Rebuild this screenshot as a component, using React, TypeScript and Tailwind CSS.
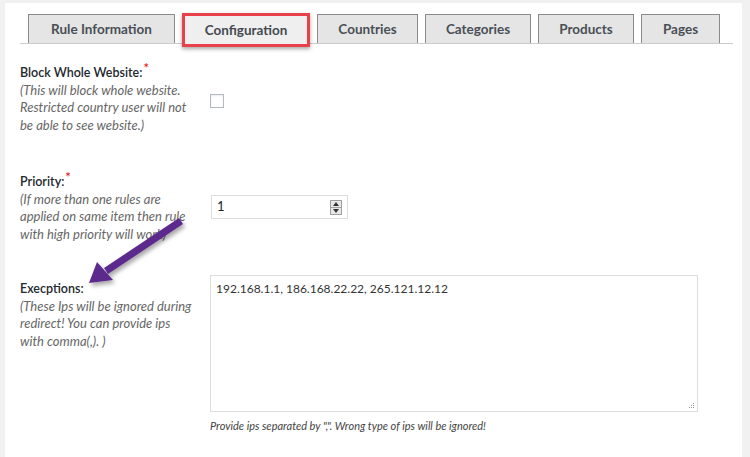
import React from "react";

const tabs = [
  { label: "Rule Information", w: "w-[147px]" },
  { label: "Configuration", w: "w-[128px]", active: true },
  { label: "Countries", w: "w-[101px]" },
  { label: "Categories", w: "w-[106px]" },
  { label: "Products", w: "w-[96px]" },
  { label: "Pages", w: "w-[79px]" },
];

const Req = () => (
  <span className="relative -top-[4px] ml-px text-[13px] leading-none text-[#dd2222]">*</span>
);

interface FieldLabelProps {
  title: string;
  required?: boolean;
  lines: string[];
}

const FieldLabel = ({ title, required, lines }: FieldLabelProps) => (
  <div className="w-[190px] shrink-0 leading-[17.5px]">
    <div className="text-[12.5px] font-semibold text-[#23282d]">
      {title}
      {required && <Req />}
    </div>
    {lines.map((l) => (
      <div key={l} className="text-[13px] italic text-[#666666]">
        {l}
      </div>
    ))}
  </div>
);

export default function App() {
  return (
    <div
      className="w-[750px] h-[457px] overflow-hidden bg-[#f1f1f1] pl-[5px] pt-[3px] pr-[8px]"
      style={{ fontFamily: "Lato, 'Open Sans', sans-serif" }}
    >
      <div className="relative h-full bg-white pl-[15px] pr-[9px]">
        {/* Tabs */}
        <div className="pt-[11px]">
          <div className="flex h-[30px] gap-[7px] border-b border-[#cccccc] pl-[8px]">
            {tabs.map((t) =>
              t.active ? (
                <div
                  key={t.label}
                  className={`${t.w} relative z-10 -mt-px flex h-[34px] shrink-0 items-center justify-center border-[3px] border-[#e8414a] bg-[#efefef] text-[13.5px] font-bold text-[#444a50] shadow-[0_2px_4px_rgba(0,0,0,0.35)]`}
                >
                  {t.label}
                </div>
              ) : (
                <div
                  key={t.label}
                  className={`${t.w} flex h-full shrink-0 items-center justify-center border border-b-0 border-[#8a8a8a] bg-[#e5e5e5] text-[13.5px] font-bold text-[#4a4f55]`}
                >
                  {t.label}
                </div>
              )
            )}
          </div>
        </div>

        {/* Block whole website */}
        <div className="mt-[20px] flex">
          <FieldLabel
            title="Block Whole Website:"
            required
            lines={[
              "(This will block whole website.",
              "Restricted country user will not",
              "be able to see website.)",
            ]}
          />
          <div className="mt-[30px] h-[14px] w-[14px] border border-[#b4b9be] bg-white shadow-[inset_0_1px_2px_rgba(0,0,0,0.08)]" />
        </div>

        {/* Priority */}
        <div className="mt-[39px] flex">
          <FieldLabel
            title="Priority:"
            required
            lines={[
              "(If more than one rules are",
              "applied on same item then rule",
              "with high priority will work)",
            ]}
          />
          <div className="mt-[22px] ml-px flex h-[24px] w-[137px] items-center justify-between border border-[#dddddd] bg-white pl-[5px] pr-[5px] text-[13px] text-[#222]">
            <span>1</span>
            <div className="flex h-[15px] w-[12px] flex-col border border-[#a0a0a0] bg-[#e8e8e8]">
              <div className="flex flex-1 items-center justify-center border-b border-[#a0a0a0]">
                <svg width="6" height="4" viewBox="0 0 6 4">
                  <path d="M3 0L6 4H0z" fill="#333" />
                </svg>
              </div>
              <div className="flex flex-1 items-center justify-center">
                <svg width="6" height="4" viewBox="0 0 6 4">
                  <path d="M0 0h6L3 4z" fill="#333" />
                </svg>
              </div>
            </div>
          </div>
        </div>

        {/* Exceptions */}
        <div className="mt-[32px] flex">
          <div className="pt-[5px]">
            <FieldLabel
              title="Execptions:"
              lines={[
                "(These Ips will be ignored during",
                "redirect! You can provide ips",
                "with comma(,). )",
              ]}
            />
          </div>
          <div>
            <div className="relative h-[137px] w-[488px] border border-[#dddddd] bg-white px-[5px] py-[4px] text-[12px] text-[#333]">
              192.168.1.1, 186.168.22.22, 265.121.12.12
              <svg
                className="absolute bottom-[2px] right-[2px]"
                width="7"
                height="7"
                viewBox="0 0 7 7"
              >
                <rect x="5" y="1" width="1" height="1" fill="#999" />
                <rect x="3" y="3" width="1" height="1" fill="#999" />
                <rect x="5" y="3" width="1" height="1" fill="#999" />
                <rect x="1" y="5" width="1" height="1" fill="#999" />
                <rect x="3" y="5" width="1" height="1" fill="#999" />
                <rect x="5" y="5" width="1" height="1" fill="#999" />
              </svg>
            </div>
            <div className="mt-[6px] text-[11px] italic text-[#444]">
              Provide ips separated by ",". Wrong type of ips will be ignored!
            </div>
          </div>
        </div>

        {/* Annotation arrow */}
        <svg
          className="pointer-events-none absolute left-[-5px] top-[-3px]"
          width="750"
          height="457"
          viewBox="0 0 750 457"
        >
          <defs>
            <filter id="sh" x="-20%" y="-20%" width="140%" height="140%">
              <feDropShadow dx="2" dy="3" stdDeviation="2" floodColor="#000" floodOpacity="0.35" />
            </filter>
          </defs>
          <g filter="url(#sh)" fill="#5c2a8c">
            <path d="M179 218 L183 224 L108 274 L104 268 Z" />
            <path d="M89 283 L97 262 L113 280 Z" />
          </g>
        </svg>
      </div>
    </div>
  );
}
